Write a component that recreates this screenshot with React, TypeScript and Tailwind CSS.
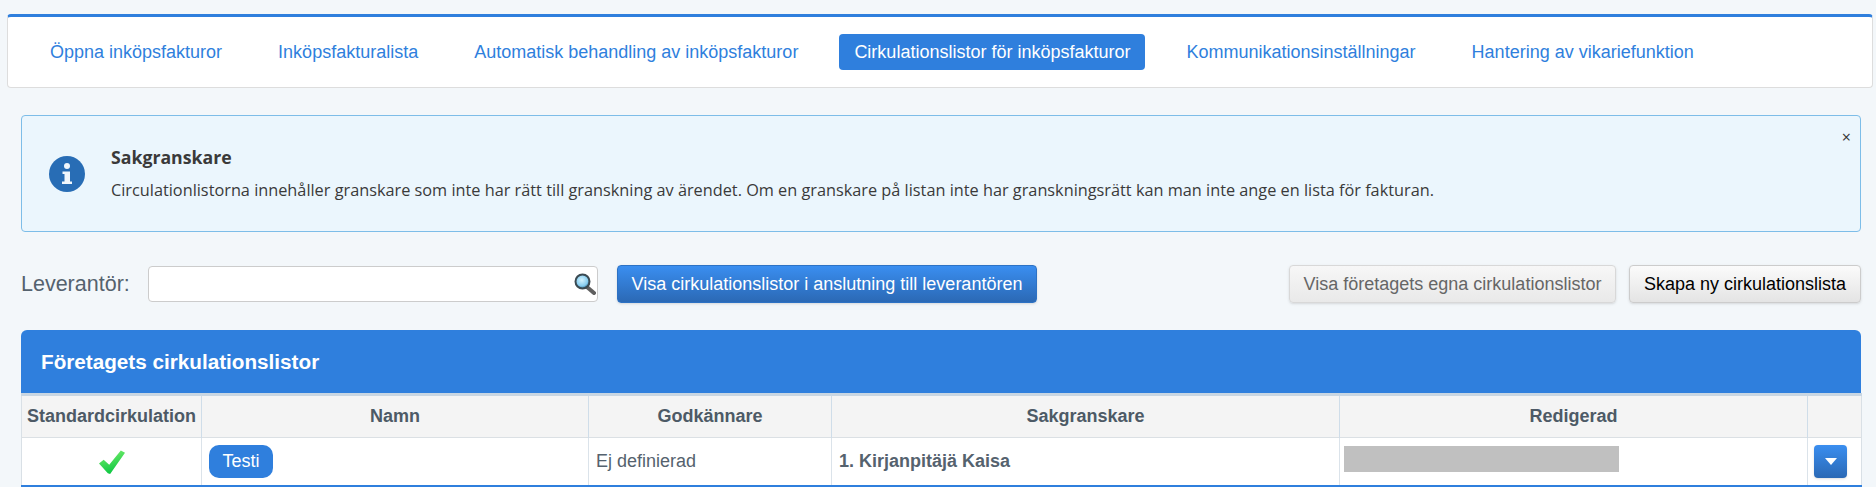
import React from "react";

const tabs = [
  "Öppna inköpsfakturor",
  "Inköpsfakturalista",
  "Automatisk behandling av inköpsfakturor",
  "Cirkulationslistor för inköpsfakturor",
  "Kommunikationsinställningar",
  "Hantering av vikariefunktion",
];

function InfoIcon() {
  return (
    <svg width="36" height="36" viewBox="0 0 36 36" className="shrink-0">
      <circle cx="18" cy="18" r="18" fill="#286db5" />
      <circle cx="18" cy="10" r="3" fill="#f1f7fc" />
      <path d="M13.5 15.5h7.5v10h2v2.5h-10v-2.5h2.500v-7.500h-2z" fill="#f1f7fc" />
    </svg>
  );
}

function Magnifier() {
  return (
    <svg width="24" height="24" viewBox="0 0 24 24" className="absolute right-[1px] top-[6px] blur-[0.5px]">
      <defs>
        <radialGradient id="lens" cx="45%" cy="40%" r="60%">
          <stop offset="0%" stopColor="#d4f3ff" />
          <stop offset="70%" stopColor="#86cdf0" />
          <stop offset="100%" stopColor="#2f6f95" />
        </radialGradient>
      </defs>
      <line x1="14" y1="15" x2="21" y2="21" stroke="#5f5f5f" strokeWidth="4" strokeLinecap="round" />
      <circle cx="9.500" cy="9.500" r="7" fill="url(#lens)" stroke="#3b4a52" strokeWidth="2" />
    </svg>
  );
}

function Check() {
  return (
    <svg width="28" height="26" viewBox="0 0 30 28" className="mx-auto block blur-[0.4px]">
      <defs>
        <linearGradient id="chk" x1="0" y1="0" x2="0.300" y2="1">
          <stop offset="0%" stopColor="#7ef06f" />
          <stop offset="100%" stopColor="#0fc843" />
        </linearGradient>
      </defs>
      <path d="M1 15.500 L6 11.500 L12 17 L24.500 1.500 L29 4 L13 27 L10.500 26 Z" fill="url(#chk)" />
    </svg>
  );
}

const thClass =
  "border-r border-[#cfdde9] last:border-r-0 text-center font-bold text-[18px] text-[#4d5a66] px-0";

export default function App() {
  return (
    <div className="h-[487px] overflow-hidden bg-[#f3f7fa] pt-[14px] font-['Liberation_Sans',Arial,sans-serif]">
      <nav className="ml-[7px] mr-[3px] h-[74px] rounded-[4px] border border-[#dddddd] border-t-[3px] border-t-[#2f7fdd] bg-white">
        <ul className="flex items-center gap-[26px] pl-[27px] pt-[17px]">
          {tabs.map((t, i) => (
            <li
              key={t}
              className={
                i === 3
                  ? "flex h-[36px] items-center rounded-[4px] bg-[#2f7fdd] px-[15px] text-[18px] text-white"
                  : "flex h-[36px] items-center px-[15px] text-[18px] text-[#2f7fdd]"
              }
            >
              {t}
            </li>
          ))}
        </ul>
      </nav>

      <div className="relative ml-[21px] mr-[15px] mt-[27px] flex h-[117px] items-center gap-[26px] rounded-[4px] border border-[#7dbde8] bg-[#ebf6fd] pl-[27px] font-['Open_Sans',sans-serif] text-[#3a3a3a]">
        <InfoIcon />
        <div>
          <div className="text-[17.700px] font-bold leading-[33px]">Sakgranskare</div>
          <div className="text-[16.300px] leading-[33px]">
            Circulationlistorna innehåller granskare som inte har rätt till granskning av ärendet. Om en granskare på listan inte har granskningsrätt kan man inte ange en lista för fakturan.
          </div>
        </div>
        <span className="absolute right-[9px] top-[9px] text-[16px] leading-[24px] text-[#333333]">×</span>
      </div>

      <div className="ml-[21px] mr-[15px] mt-[33px] flex h-[38px] items-center">
        <label className="w-[127px] text-[21.500px] text-[#55626e]">Leverantör:</label>
        <div className="relative h-[36px] w-[450px]">
          <input className="h-full w-full rounded-[4px] border border-[#cccccc] bg-white" />
          <Magnifier />
        </div>
        <button className="ml-[19px] h-[38px] w-[420px] rounded-[4px] border border-[#2d72c4] bg-gradient-to-b from-[#3a8ef0] to-[#2b69b5] text-[18px] text-white shadow-sm">
          Visa cirkulationslistor i anslutning till leverantören
        </button>
        <button className="ml-auto h-[38px] w-[327px] rounded-[4px] border border-[#d8d8d8] bg-gradient-to-b from-[#f7f7f7] to-[#e9e9e9] text-[18px] text-[#666666] shadow-sm">
          Visa företagets egna cirkulationslistor
        </button>
        <button className="ml-[13px] h-[38px] w-[232px] rounded-[4px] border border-[#cccccc] bg-gradient-to-b from-[#fbfbfb] to-[#e4e4e4] text-[18px] text-black shadow-sm">
          Skapa ny cirkulationslista
        </button>
      </div>

      <section className="ml-[21px] mr-[15px] mt-[27px]">
        <h2 className="flex h-[63px] items-center rounded-t-[6px] bg-[#2f7fdd] pl-[20px] text-[20.700px] font-bold text-white">
          Företagets cirkulationslistor
        </h2>
        <table className="w-[1840px] table-fixed border-collapse border-x border-[#d9e0e6] border-t-[3px] border-t-[#c9d6e2] border-b-[3px] border-b-[#2f7fdd] bg-white">
          <colgroup>
            <col className="w-[180px]" />
            <col className="w-[387px]" />
            <col className="w-[243px]" />
            <col className="w-[508px]" />
            <col className="w-[468px]" />
            <col className="w-[54px]" />
          </colgroup>
          <thead>
            <tr className="h-[43px] border-b border-[#dbe0e4] bg-[#f4f4f4]">
              <th className={thClass}>Standardcirkulation</th>
              <th className={thClass}>Namn</th>
              <th className={thClass}>Godkännare</th>
              <th className={thClass}>Sakgranskare</th>
              <th className={thClass}>Redigerad</th>
              <th className={thClass}></th>
            </tr>
          </thead>
          <tbody>
            <tr className="h-[49px] text-[18px] text-[#55626e]">
              <td className="border-r border-[#dbe3ea] align-middle">
                <Check />
              </td>
              <td className="border-r border-[#dbe3ea] pl-[7px] align-middle">
                <span className="inline-flex h-[33px] w-[64px] items-center justify-center rounded-[10px] bg-[#2f7fdd] text-white">
                  Testi
                </span>
              </td>
              <td className="border-r border-[#dbe3ea] pl-[7px] align-middle">Ej definierad</td>
              <td className="border-r border-[#dbe3ea] pl-[7px] align-middle font-bold">1. Kirjanpitäjä Kaisa</td>
              <td className="border-r border-[#dbe3ea] pl-[4px] pt-[8px] align-top">
                <div className="h-[26px] w-[275px] bg-[#c0c0c0]" />
              </td>
              <td className="pl-[6px] align-middle">
                <button className="flex h-[33px] w-[33px] items-center justify-center rounded-[4px] bg-gradient-to-b from-[#3a8ef0] to-[#2b69b5] shadow-sm">
                  <svg width="12" height="7" viewBox="0 0 12 7">
                    <path d="M0 0h12L6 7z" fill="#ffffff" />
                  </svg>
                </button>
              </td>
            </tr>
          </tbody>
        </table>
      </section>
    </div>
  );
}
